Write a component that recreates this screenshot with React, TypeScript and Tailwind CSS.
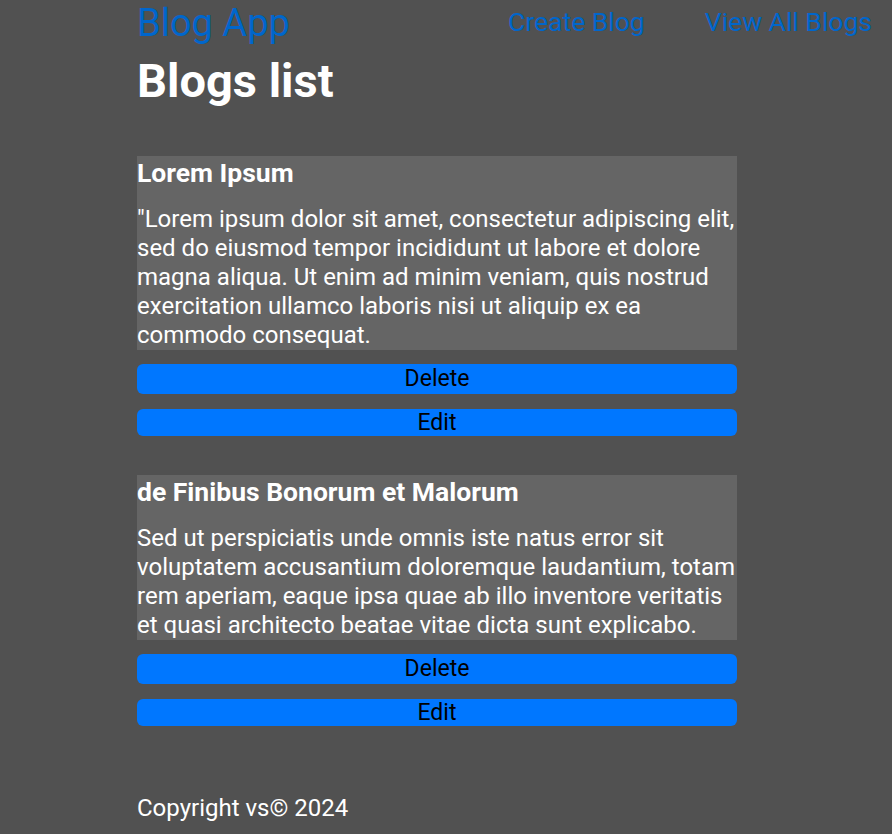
const posts = [
  {
    title: "Lorem Ipsum",
    body: '"Lorem ipsum dolor sit amet, consectetur adipiscing elit, sed do eiusmod tempor incididunt ut labore et dolore magna aliqua. Ut enim ad minim veniam, quis nostrud exercitation ullamco laboris nisi ut aliquip ex ea commodo consequat.',
  },
  {
    title: "de Finibus Bonorum et Malorum",
    body: "Sed ut perspiciatis unde omnis iste natus error sit voluptatem accusantium doloremque laudantium, totam rem aperiam, eaque ipsa quae ab illo inventore veritatis et quasi architecto beatae vitae dicta sunt explicabo.",
  },
];

export default function App() {
  return (
    <div className="min-h-screen bg-[#515151] font-['Roboto',sans-serif] pl-[137px] pr-5">
      {/* Nav */}
      <nav className="flex items-start justify-between">
        <span className="text-[38px] leading-[46px] text-[#0066cc]">Blog App</span>
        <div className="flex gap-[60px] pt-[4px]">
          <a className="text-[26.5px] leading-[36px] text-[#0066cc]">Create Blog</a>
          <a className="text-[26.5px] leading-[36px] text-[#0066cc]">View All Blogs</a>
        </div>
      </nav>

      <div className="w-[600px]">
        <h1 className="pt-[3px] text-[47px] leading-[64px] font-bold text-white">Blogs list</h1>

        <div className="mt-[43px] flex flex-col gap-[39px]">
          {posts.map((p) => (
            <div key={p.title}>
              <div className="bg-[#656565] text-white">
                <h2 className="text-[26.5px] leading-[34px] font-bold">{p.title}</h2>
                <p className="mt-[15px] text-[24px] leading-[29px]">{p.body}</p>
              </div>
              <button className="mt-[14px] block w-full h-[30px] rounded-md bg-[#0077ff] text-[23px] leading-[30px] text-black">
                Delete
              </button>
              <button className="mt-[15px] block w-full h-[27px] rounded-md bg-[#0077ff] text-[23px] leading-[27px] text-black">
                Edit
              </button>
            </div>
          ))}
        </div>

        <footer className="pt-[67px] pb-[6px] text-[24px] leading-[30px] text-white">
          Copyright vs© 2024
        </footer>
      </div>
    </div>
  );
}
